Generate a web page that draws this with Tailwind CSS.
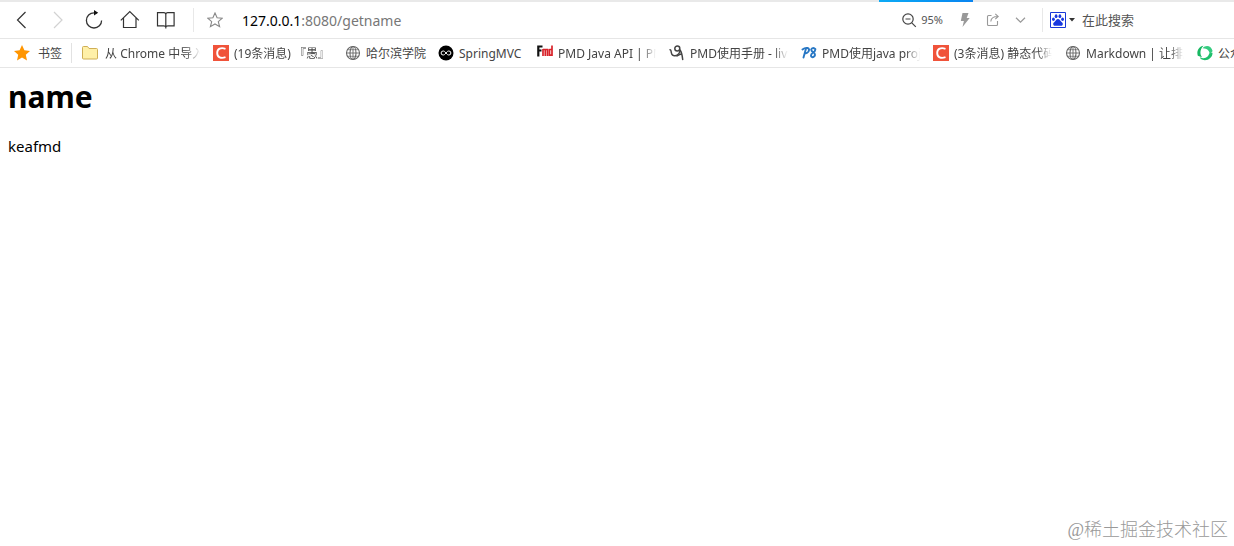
<!DOCTYPE html>
<html lang="zh-CN">
<head>
<meta charset="utf-8">
<meta name="viewport" content="width=device-width, initial-scale=1">
<title>name</title>
<script src="https://cdn.jsdelivr.net/npm/@tailwindcss/browser@4"></script>
</head>
<body class="min-h-screen flex flex-col overflow-x-hidden bg-white text-black font-['Noto_Sans','Noto_Sans_CJK_SC',sans-serif]">

<header class="text-[#444]">
  <div class="flex h-0.5 bg-[#e9e9e9]" aria-hidden="true">
    <div class="ml-[879px] w-[94px] shrink-0 bg-gradient-to-r from-[#0eaaf5] to-[#0a84f0]"></div>
  </div>

  <nav class="flex h-9 items-center" aria-label="工具栏">
    <div class="flex shrink-0 items-center gap-4 pl-3 text-[#333]">
      <button type="button" aria-label="后退" class="size-5"><svg viewBox="0 0 20 20" class="size-5" fill="none" stroke="currentColor" stroke-width="1.2"><path d="M13.5 2 5.5 10l8 8"/></svg></button>
      <button type="button" aria-label="前进" class="size-5 text-[#d2d2d2]"><svg viewBox="0 0 20 20" class="size-5" fill="none" stroke="currentColor" stroke-width="1.2"><path d="m6 2 8 8-8 8"/></svg></button>
      <button type="button" aria-label="刷新" class="size-5"><svg viewBox="0 0 20 20" class="size-5" fill="none" stroke="currentColor" stroke-width="1.3"><path d="M12.5 2.8H10a7.6 7.6 0 1 0 7.6 7.6"/><path d="M10 0v5.6l4.2-2.8z" fill="#111" stroke="none"/></svg></button>
      <button type="button" aria-label="主页" class="size-5"><svg viewBox="0 0 20 20" class="size-5" fill="none" stroke="currentColor" stroke-width="1.2"><path d="M.8 10.400 9.800 1.600l9 8.800M3.500 8v9.500h12.500V8"/></svg></button>
      <button type="button" aria-label="阅读" class="size-5"><svg viewBox="0 0 20 20" class="size-5" fill="none" stroke="currentColor" stroke-width="1.2"><path d="M1.500 2.600h6.300q2 0 2 2 0-2 2-2h6.300v13.200h-6.200q-2.100 0-2.100 1.200 0-1.200-2.100-1.200H1.500zM9.800 4.400v14"/></svg></button>
    </div>
    <div class="ml-[17px] mr-[13px] h-6 w-px shrink-0 bg-[#e8e8e8]"></div>
    <button type="button" aria-label="收藏" class="size-4 shrink-0"><svg viewBox="0 0 16 16" class="size-4" fill="none" stroke="#888" stroke-width="1.1"><path d="m8 1 2.100 4.800 5.200.4-4 3.400 1.300 5.100L8 12l-4.600 2.700 1.300-5.100-4-3.400 5.200-.4z"/></svg></button>
    <a href="#" class="ml-[19px] min-w-0 flex-1 truncate pt-px text-sm text-[#777]"><span class="text-black">127.0.0.1</span>:8080/getname</a>
    <div class="flex shrink-0 items-center text-[#999]">
      <button type="button" class="flex items-center gap-1 text-[11px] text-[#555]"><svg viewBox="0 0 16 16" class="size-4" fill="none" stroke="#444" stroke-width="1.2"><circle cx="7" cy="7" r="5.2"/><path d="m10.800 10.800 4 4M4.500 7h5"/></svg><span class="pt-px">95%</span></button>
      <button type="button" aria-label="极速模式" class="ml-3.5 size-4"><svg viewBox="0 0 16 16" class="size-4" fill="currentColor"><path d="M5.500 1h6L9.700 6h3L5.500 15l1.400-6H3.800z"/></svg></button>
      <button type="button" aria-label="分享" class="ml-3 size-4"><svg viewBox="0 0 16 16" class="size-4" fill="none" stroke="currentColor" stroke-width="1.1"><path d="M6.500 3.500h-3q-1 0-1 1v8q0 1 1 1h8q1 0 1-1V9M5.800 9.500q.4-5 6.800-5M10.300 1.800l2.900 2.700-2.900 2.700"/></svg></button>
      <button type="button" aria-label="更多" class="ml-3 size-4"><svg viewBox="0 0 16 16" class="size-4" fill="none" stroke="currentColor" stroke-width="1.2"><path d="m3 5.800 4.500 4.400L12 5.800"/></svg></button>
    </div>
    <div class="ml-[13px] mr-[7px] h-6 w-px shrink-0 bg-[#e8e8e8]"></div>
    <form class="flex w-[184px] shrink-0 items-center">
      <button type="button" aria-label="百度" class="flex items-center">
        <svg viewBox="0 0 16 16" class="size-4"><path d="M.5.5h15v15H.5z" fill="#fff" stroke="#1838d8"/><g fill="#1838e0"><ellipse cx="3.400" cy="7.300" rx="1.400" ry="1.800"/><ellipse cx="6.100" cy="4.200" rx="1.400" ry="1.900"/><ellipse cx="9.900" cy="4.200" rx="1.400" ry="1.900"/><ellipse cx="12.600" cy="7.300" rx="1.400" ry="1.800"/><path d="M8 7.100c1.700 0 2 1.700 3.300 2.700 1.200.9 1.800 1.700 1.400 2.900-.6 1.700-2.800 1-4.700 1s-4.100.7-4.700-1c-.4-1.200.2-2 1.400-2.900C6 8.800 6.300 7.100 8 7.100z"/></g></svg>
        <svg viewBox="0 0 6 4" class="ml-[3px] h-1 w-1.5" fill="#333"><path d="M0 0h6L3 3.500z"/></svg>
      </button>
      <input type="text" aria-label="在此搜索" placeholder="在此搜索" class="ml-[7px] min-w-0 flex-1 pt-px text-[13px] outline-none placeholder:text-[#555]">
    </form>
  </nav>

  <nav class="flex h-[30px] items-center overflow-hidden border-y border-[#e6e6e6] text-xs whitespace-nowrap" aria-label="书签栏">
    <button type="button" class="ml-3.5 flex shrink-0 items-center gap-2"><svg viewBox="0 0 16 16" class="size-4" fill="#ff9500"><path d="m8 0 2.400 5.300 5.600.6-4.200 3.900 1.200 5.700L8 12.600l-5 2.900 1.200-5.700L0 5.900l5.600-.6z"/></svg><span class="pt-0.5">书签</span></button>
    <div class="mx-[9px] h-5 w-px shrink-0 bg-[#e2e2e2]"></div>
    <div class="flex gap-[13px] pl-px">
      <a href="#" class="flex shrink-0 items-center gap-[7px]"><svg viewBox="0 0 16 16" class="size-4 shrink-0" fill="#fff0a8" stroke="#cfae55"><path d="M.5 2.500q0-1 1-1h4l1.500 2h7.500q1 0 1 1v8.500q0 1-1 1h-13q-1 0-1-1z"/></svg><span class="w-[95px] overflow-hidden pt-0.5 mask-r-from-85%">从 Chrome 中导入</span></a>
      <a href="#" class="flex shrink-0 items-center gap-[5px]"><svg viewBox="0 0 16 16" class="size-4 shrink-0"><path d="M0 0h16v16H0z" fill="#f0533a"/><path d="M12.500 3.800C8 2.300 4.200 3.500 4.200 8s3.800 5.700 8.300 4.200" fill="none" stroke="#fff" stroke-width="1.900"/></svg><span class="w-[98px] overflow-hidden pt-0.5 mask-r-from-85%">(19条消息) 『愚』</span></a>
      <a href="#" class="flex shrink-0 items-center gap-[5px]"><svg viewBox="0 0 16 16" class="size-4 shrink-0" fill="none" stroke="#666" stroke-width="1.100"><circle cx="8" cy="8" r="6.500"/><ellipse cx="8" cy="8" rx="3" ry="6.500"/><path d="M8 1.500v13M1.500 8h13" stroke-width=".9"/><path d="M2.700 4.700h10.600M2.700 11.300h10.600" stroke-width=".7"/></svg><span class="w-[59px] pt-0.5">哈尔滨学院</span></a>
      <a href="#" class="flex shrink-0 items-center gap-[5px]"><svg viewBox="0 0 16 16" class="size-4 shrink-0"><circle cx="8" cy="8" r="7.500" fill="#000"/><path d="M8 8C6.800 6.400 6.100 6 5.100 6a2 2 0 0 0 0 4C6.100 10 6.800 9.600 8 8s1.900-2 2.900-2a2 2 0 0 1 0 4C9.900 10 9.200 9.600 8 8z" fill="none" stroke="#fff" stroke-width="1"/></svg><span class="w-[65px] pt-0.5">SpringMVC</span></a>
      <a href="#" class="flex shrink-0 items-center gap-[5px]"><svg viewBox="0 0 16 16" class="size-4 shrink-0" fill="none"><path d="M1.300 11.500V1.500H5.500M1.500 5.500h3" stroke="#111" stroke-width="2.200"/><path d="M6 11V4M6 4.500h4.500V11M8.300 4.500V11M12.300 4.500h2.500M12.500 4v6.200h2.300M15 .5V11" stroke="#d8232a" stroke-width="1.700"/></svg><span class="w-[98px] overflow-hidden pt-0.5 mask-r-from-85%">PMD Java API | PMD</span></a>
      <a href="#" class="flex shrink-0 items-center gap-[5px]"><svg viewBox="0 0 16 16" class="size-4 shrink-0" fill="none" stroke="#444" stroke-width="1.500" stroke-linecap="round"><path d="M1 4.800q1 0 1.300 2.700.6 3.800 4 3.200 4.200-1 4.700-5.200"/><circle cx="8.300" cy="3.600" r="2.500"/><path d="M11 5q2 2.500 2.700 9.500M8 11q3-2 4.800-2"/></svg><span class="w-[98px] overflow-hidden pt-0.5 mask-r-from-85%">PMD使用手册 - livw</span></a>
      <a href="#" class="flex shrink-0 items-center gap-[5px]"><svg viewBox="0 0 16 16" class="size-4 shrink-0" fill="none" stroke="#2877c4" stroke-width="1.900" stroke-linecap="round"><path d="M1.500 4.500Q4 2.500 6.500 3q2.500 1 1 3.500Q6 8.700 4 8M5 3.500 2.500 12.500M14.300 4q-3-2-4 .3-.4 1.700 2 3 2.500 1.700 1.200 3.900-1.500 1.800-3.200.4-1-2 1.500-3.800Q14.800 6 14.300 4"/></svg><span class="w-[98px] overflow-hidden pt-0.5 mask-r-from-85%">PMD使用java project</span></a>
      <a href="#" class="flex shrink-0 items-center gap-[5px]"><svg viewBox="0 0 16 16" class="size-4 shrink-0"><path d="M0 0h16v16H0z" fill="#f0533a"/><path d="M12.500 3.800C8 2.300 4.200 3.500 4.200 8s3.800 5.700 8.300 4.200" fill="none" stroke="#fff" stroke-width="1.900"/></svg><span class="w-[98px] overflow-hidden pt-0.5 mask-r-from-85%">(3条消息) 静态代码</span></a>
      <a href="#" class="flex shrink-0 items-center gap-[5px]"><svg viewBox="0 0 16 16" class="size-4 shrink-0" fill="none" stroke="#666" stroke-width="1.100"><circle cx="8" cy="8" r="6.500"/><ellipse cx="8" cy="8" rx="3" ry="6.500"/><path d="M8 1.500v13M1.500 8h13" stroke-width=".9"/><path d="M2.700 4.700h10.600M2.700 11.300h10.600" stroke-width=".7"/></svg><span class="w-[98px] overflow-hidden pt-0.5 mask-r-from-85%">Markdown | 让排版</span></a>
      <a href="#" class="flex shrink-0 items-center gap-[5px]"><svg viewBox="0 0 16 16" class="size-4 shrink-0"><path d="M6.500.8C2 1.500-.8 6 .8 10.800l4.200 1.400C2.500 9 3 4 6.500.8z" fill="#17b862"/><path d="M5.500 3.200C9-.8 14.500.8 15.600 6l-2.800 4.200C13 6 10 3 5.500 3.200z" fill="#35cc80"/><path d="M15.500 7.800c.3 5-6 9.500-11.800 6.200l-.7-1.700C8 14.500 11.500 12 12.200 8.500z" fill="#1fbf6b"/></svg><span class="pt-0.5">公众号</span></a>
    </div>
  </nav>
</header>

<main class="flex-1 px-2 pt-2">
  <h1 class="text-3xl leading-[42px] font-bold">name</h1>
  <p class="mt-[18px] text-[15px] leading-5">keafmd</p>
</main>

<footer class="px-1.5 pb-1 text-right text-lg leading-6 font-light text-[#999] font-['Liberation_Serif','Noto_Sans_CJK_SC',serif]">@稀土掘金技术社区</footer>
</body>
</html>
